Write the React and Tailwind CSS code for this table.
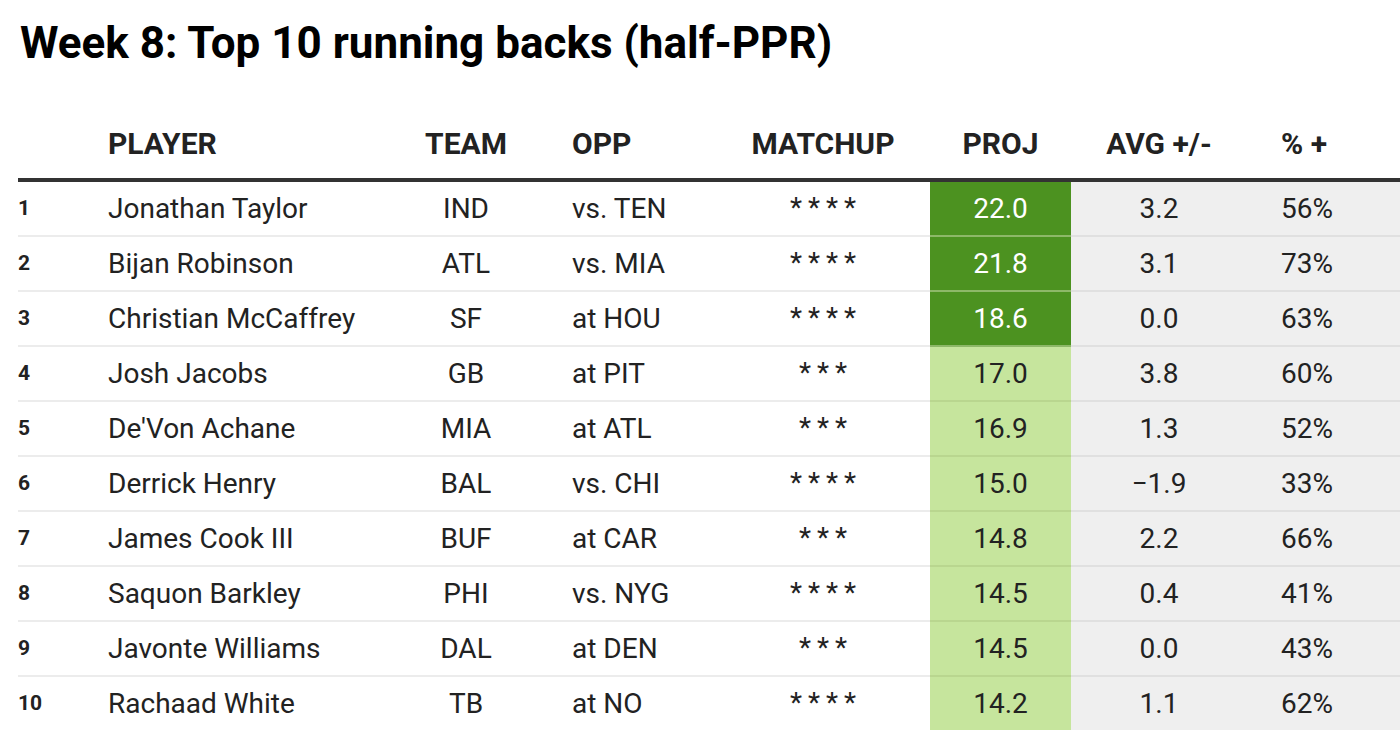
import React from 'react';

const rows = [
  { rank: 1, player: 'Jonathan Taylor', team: 'IND', opp: 'vs. TEN', stars: 4, proj: '22.0', avg: '3.2', pct: '56%', top: true },
  { rank: 2, player: 'Bijan Robinson', team: 'ATL', opp: 'vs. MIA', stars: 4, proj: '21.8', avg: '3.1', pct: '73%', top: true },
  { rank: 3, player: 'Christian McCaffrey', team: 'SF', opp: 'at HOU', stars: 4, proj: '18.6', avg: '0.0', pct: '63%', top: true },
  { rank: 4, player: 'Josh Jacobs', team: 'GB', opp: 'at PIT', stars: 3, proj: '17.0', avg: '3.8', pct: '60%' },
  { rank: 5, player: "De'Von Achane", team: 'MIA', opp: 'at ATL', stars: 3, proj: '16.9', avg: '1.3', pct: '52%' },
  { rank: 6, player: 'Derrick Henry', team: 'BAL', opp: 'vs. CHI', stars: 4, proj: '15.0', avg: '\u22121.9', pct: '33%' },
  { rank: 7, player: 'James Cook III', team: 'BUF', opp: 'at CAR', stars: 3, proj: '14.8', avg: '2.2', pct: '66%' },
  { rank: 8, player: 'Saquon Barkley', team: 'PHI', opp: 'vs. NYG', stars: 4, proj: '14.5', avg: '0.4', pct: '41%' },
  { rank: 9, player: 'Javonte Williams', team: 'DAL', opp: 'at DEN', stars: 3, proj: '14.5', avg: '0.0', pct: '43%' },
  { rank: 10, player: 'Rachaad White', team: 'TB', opp: 'at NO', stars: 4, proj: '14.2', avg: '1.1', pct: '62%' },
];

function App() {
  return (
    <div className="min-h-screen bg-white text-[#222] font-['Roboto',sans-serif]">
      <h1 className="pl-[20px] pt-[17px] text-[44px] font-bold leading-[52px] text-black">
        Week 8: Top 10 running backs (half-PPR)
      </h1>

      <table className="ml-[18px] mt-[57px] w-[1382px] border-collapse table-fixed">
        <colgroup>
          <col className="w-[90px]" />
          <col className="w-[312px]" />
          <col className="w-[92px]" />
          <col className="w-[204px]" />
          <col className="w-[214px]" />
          <col className="w-[141px]" />
          <col className="w-[176px]" />
          <col />
        </colgroup>
        <thead>
          <tr className="border-b-4 border-[#333] text-[30px] font-bold leading-[36px]">
            <th className="pb-[16px]"></th>
            <th className="pb-[16px] text-left">PLAYER</th>
            <th className="pb-[16px] text-center">TEAM</th>
            <th className="pb-[16px] pl-[60px] text-left">OPP</th>
            <th className="pb-[16px] text-center">MATCHUP</th>
            <th className="pb-[16px] text-center">PROJ</th>
            <th className="pb-[16px] text-center">AVG +/-</th>
            <th className="pb-[16px] pl-[34px] text-left">% +</th>
          </tr>
        </thead>
        <tbody className="text-[28px] leading-[53px]">
          {rows.map((r, i) => {
            const last = i === rows.length - 1;
            const b = last ? '' : 'border-b-2';
            return (
              <tr key={r.rank} className="h-[53px]">
                <td className={`${b} border-[#ececec] text-[21px] font-bold`}>{r.rank}</td>
                <td className={`${b} border-[#ececec]`}>{r.player}</td>
                <td className={`${b} border-[#ececec] text-center`}>{r.team}</td>
                <td className={`${b} border-[#ececec] pl-[60px]`}>{r.opp}</td>
                <td className={`${b} border-[#ececec] text-center`}>
                  <span className="relative top-[-1px] tracking-[6px] pl-[6px]">{r.stars === 4 ? '****' : '***'}</span>
                </td>
                <td
                  className={`${b} text-center ${
                    r.top ? 'bg-[#4c9220] text-white border-[#8db868]' : 'bg-[#c6e59d] border-[#b9d68f]'
                  }`}
                >
                  {r.proj}
                </td>
                <td className={`${b} border-[#e0e0e0] bg-[#efefef] text-center`}>{r.avg}</td>
                <td className={`${b} border-[#e0e0e0] bg-[#efefef] pl-[34px]`}>{r.pct}</td>
              </tr>
            );
          })}
        </tbody>
      </table>
    </div>
  );
}

export default App;
